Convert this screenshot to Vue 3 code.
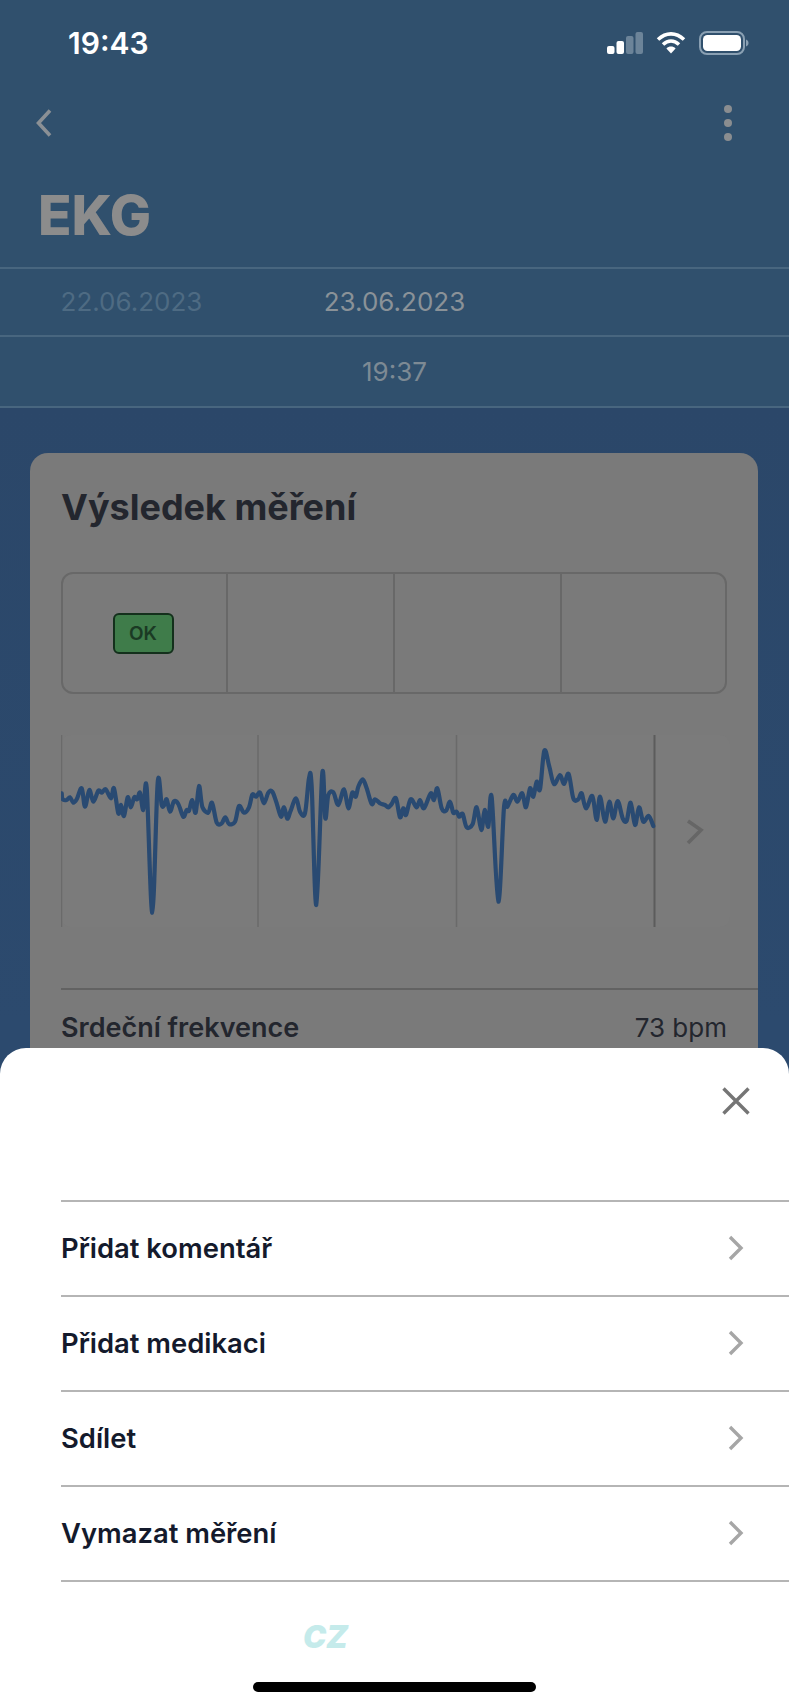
<template>
  <div class="page">
    <header class="top">
      <div class="status">
        <span class="clock">19:43</span>
        <div class="status-icons">
          <svg width="36" height="24" viewBox="0 0 36 24">
            <rect x="0" y="15" width="7.5" height="8" rx="2" fill="#fff" />
            <rect x="9.5" y="10" width="7.5" height="13" rx="2" fill="#fff" />
            <rect x="19" y="5" width="7.5" height="18" rx="2" fill="#6c8499" />
            <rect x="28.5" y="1" width="7.5" height="22" rx="2" fill="#6c8499" />
          </svg>
          <svg width="30" height="24" viewBox="0 0 30 24">
            <path d="M2 8.5C10 1 20 1 28 8.5" fill="none" stroke="#fff" stroke-width="3.6" />
            <path d="M7 13.5C12 9 18 9 23 13.5" fill="none" stroke="#fff" stroke-width="3.6" />
            <path d="M10.4 17.4C13 15 17 15 19.6 17.4L15 22.6Z" fill="#fff" />
          </svg>
          <svg width="50" height="24" viewBox="0 0 50 24">
            <rect x="1" y="1" width="44" height="22" rx="7" fill="none" stroke="#8aa0b3" stroke-width="2" />
            <rect x="4" y="4" width="38" height="16" rx="4.5" fill="#fff" />
            <path d="M47 8.5C49 9.5 49.5 10.5 49.5 12S49 14.5 47 15.5Z" fill="#8aa0b3" />
          </svg>
        </div>
      </div>

      <div class="nav">
        <svg width="20" height="30" viewBox="0 0 20 30">
          <path d="M16 2.5L4.5 15L16 27.5" fill="none" stroke="#8b9095" stroke-width="3.6" />
        </svg>
        <div class="dots"><i></i><i></i><i></i></div>
      </div>

      <h1 class="title">EKG</h1>

      <div class="picker dates">
        <span class="far">22.06.2023</span>
        <span class="near">23.06.2023</span>
      </div>
      <div class="picker times">
        <span></span>
        <span class="mid">19:37</span>
      </div>
    </header>

    <main class="body">
      <section class="card">
        <h2>Výsledek měření</h2>

        <div class="tiles">
          <div class="tile"><span class="ok">OK</span></div>
          <div class="tile"></div>
          <div class="tile"></div>
          <div class="tile"></div>
        </div>

        <div class="chart">
          <svg width="669" height="192" viewBox="61 735 669 192">
            <line v-for="x in gridLines" :key="x" :x1="x" :x2="x" y1="735" y2="927" stroke="#6a6a6a" stroke-width="1.5" />
            <line x1="654.5" x2="654.5" y1="735" y2="927" stroke="#5c5c5c" stroke-width="2" />
            <path :d="trace" fill="none" stroke="#294a72" stroke-width="4.2" stroke-linejoin="round" stroke-linecap="round" />
            <path d="M688 821L701 830L688 843" fill="none" stroke="#666" stroke-width="3.6" />
          </svg>
        </div>

        <div class="stat">
          <b>Srdeční frekvence</b>
          <span>73 bpm</span>
        </div>
      </section>
    </main>

    <section class="sheet">
      <div class="sheet-head">
        <svg width="28" height="28" viewBox="0 0 28 28">
          <path d="M1.5 1.5L26.5 26.5M26.5 1.5L1.5 26.5" stroke="#757575" stroke-width="3.4" />
        </svg>
      </div>
      <ul class="menu">
        <li v-for="item in menu" :key="item">
          <span>{{ item }}</span>
          <svg width="16" height="26" viewBox="0 0 16 26">
            <path d="M2 2L13 13L2 24" fill="none" stroke="#a6a6a6" stroke-width="3.4" />
          </svg>
        </li>
      </ul>
      <div class="brand">CZ</div>
      <div class="home"></div>
    </section>
  </div>
</template>

<script setup>
const menu = ['Přidat komentář', 'Přidat medikaci', 'Sdílet', 'Vymazat měření']
const gridLines = [61.5, 258, 456.5]

// trace read off the reference, in crop coordinates (3x)
const partA = [[65,220],[68,238],[80,240],[90,232],[100,248],[110,238],[125,205],[135,260],[148,210],[160,245],[175,212],[185,218],[197,208],[213,235],[222,205],[235,280],[243,255],[252,288],[263,232],[272,262],[283,232],[292,238],[300,218],[310,270],[320,203],[337,578],[353,188],[365,255],[373,255],[380,238],[390,275],[402,244],[415,252],[430,290],[440,270],[447,272],[457,240],[467,278],[477,198],[487,260],[505,278],[516,248],[530,308],[545,310],[556,292],[567,312],[585,305],[597,258],[612,278],[627,262],[637,224],[648,230],[660,218],[672,250],[685,218],[697,215],[710,250],[723,290],[732,262],[742,296],[752,272],[768,235],[780,275],[795,280],[807,175],[815,200],[829,555],[847,160],[856,295],[865,225],[880,217],[895,255],[912,208],[925,265],[937,218],[947,230],[955,200],[968,178],[980,205],[995,252],[1005,238],[1020,250],[1035,255],[1045,262],[1055,252],[1068,235],[1080,292],[1090,265],[1098,285],[1112,238],[1130,262],[1140,240]]
const partB = [[42,265],[62,220],[72,240],[82,205],[95,265],[108,272],[120,245],[130,278],[140,275],[148,290],[158,282],[170,322],[188,312],[200,262],[214,330],[224,270],[235,320],[245,232],[265,545],[282,262],[292,260],[310,225],[322,245],[337,220],[348,262],[360,205],[370,230],[380,185],[390,208],[403,92],[418,140],[432,192],[450,165],[462,192],[476,162],[490,235],[505,238],[515,220],[528,265],[547,228],[560,300],[570,230],[585,305],[598,245],[610,295],[623,243],[638,295],[650,302],[662,248],[675,315],[687,262],[700,305],[716,288],[730,318]]

const pts = [
  ...partA.map(([x, y]) => [40 + x / 3, 720 + y / 3]),
  ...partB.map(([x, y]) => [410 + x / 3, 720 + y / 3])
]

function smooth(p) {
  let d = `M${p[0][0].toFixed(1)} ${p[0][1].toFixed(1)}`
  for (let i = 0; i < p.length - 1; i++) {
    const a = p[i - 1] || p[i]
    const b = p[i]
    const c = p[i + 1]
    const e = p[i + 2] || c
    const c1 = [b[0] + (c[0] - a[0]) / 6, b[1] + (c[1] - a[1]) / 6]
    const c2 = [c[0] - (e[0] - b[0]) / 6, c[1] - (e[1] - b[1]) / 6]
    d += `C${c1[0].toFixed(1)} ${c1[1].toFixed(1)} ${c2[0].toFixed(1)} ${c2[1].toFixed(1)} ${c[0].toFixed(1)} ${c[1].toFixed(1)}`
  }
  return d
}

const trace = smooth(pts)
</script>

<style>
html, body { margin: 0; background: #2c4a6e; }
</style>

<style scoped>
.page {
  position: relative;
  width: 789px;
  height: 1707px;
  overflow: hidden;
  font-family: Inter, "Liberation Sans", sans-serif;
  background: linear-gradient(#2b4769 24%, #2c4a6e 60%);
}
.top { background: #30506d; height: 408px; }
.status {
  height: 86px;
  display: flex;
  justify-content: space-between;
  align-items: center;
  padding: 0 40px 0 68px;
}
.clock { color: #fff; font-size: 30px; font-weight: 600; }
.status-icons { display: flex; align-items: center; gap: 13px; }
.status-icons svg { display: block; }
.nav {
  height: 74px;
  display: flex;
  justify-content: space-between;
  align-items: center;
  padding: 0 57px 0 34px;
}
.dots { display: flex; flex-direction: column; gap: 6px; }
.dots i { width: 8px; height: 8px; border-radius: 50%; background: #8a8d90; }
.title {
  margin: 0;
  height: 107px;
  padding: 16px 0 0 38px;
  box-sizing: border-box;
  color: #8c8c8c;
  font-size: 55px;
  font-weight: 800;
  line-height: 78px;
}
.picker {
  display: grid;
  grid-template-columns: repeat(3, 263px);
  align-items: center;
  justify-items: center;
  border-top: 2px solid #48667f;
  font-size: 26px;
  box-sizing: border-box;
}
.dates { height: 68px; }
.dates span { margin-top: -2px; }
.times { height: 73px; border-bottom: 2px solid #48667f; }
.far { color: #4e6b83; }
.near { color: #8a9298; }
.mid { color: #7d8a94; }

.body { padding: 45px 31px 0 30px; }
.card {
  height: 700px;
  padding: 30px 0 0 31px;
  box-sizing: border-box;
  background: #7a7a7a;
  border-radius: 18px;
}
.card h2 {
  margin: 0;
  color: #23262e;
  font-size: 36px;
  font-weight: 700;
  line-height: 48px;
}
.tiles {
  margin-top: 41px;
  width: 666px;
  height: 122px;
  box-sizing: border-box;
  display: grid;
  grid-template-columns: 163px 167px 167px 1fr;
  border: 2px solid #686868;
  border-radius: 12px;
}
.tile {
  display: flex;
  align-items: center;
  justify-content: center;
  border-left: 2px solid #686868;
}
.tile:first-child { border-left: none; padding-right: 3px; }
.ok {
  width: 61px;
  height: 41px;
  box-sizing: border-box;
  display: flex;
  align-items: center;
  justify-content: center;
  background: #3f7c4a;
  border: 2px solid #14301c;
  border-radius: 6px;
  color: #1b3a24;
  font-size: 19px;
  font-weight: 600;
}
.chart {
  margin-top: 41px;
  width: 669px;
  height: 192px;
  background: #7b7b7b;
  border-radius: 10px;
}
.chart svg { display: block; }
.stat {
  margin-top: 61px;
  height: 78px;
  display: flex;
  justify-content: space-between;
  align-items: center;
  padding: 0 31px 2px 0;
  border-top: 2px solid #626262;
  box-sizing: border-box;
  color: #23262e;
  font-size: 26px;
}
.stat b { font-weight: 600; font-size: 27px; }

.sheet {
  position: absolute;
  left: 0;
  right: 0;
  bottom: 0;
  height: 659px;
  background: #fff;
  border-radius: 26px 26px 0 0;
}
.sheet-head {
  height: 152px;
  display: flex;
  justify-content: flex-end;
  align-items: flex-start;
  padding: 39px 39px 0 0;
  box-sizing: border-box;
}
.sheet-head svg { display: block; }
.menu {
  list-style: none;
  margin: 0 0 0 61px;
  padding: 0;
  border-top: 2px solid #b5b5b5;
}
.menu li {
  height: 95px;
  box-sizing: border-box;
  display: flex;
  justify-content: space-between;
  align-items: center;
  padding-right: 45px;
  border-bottom: 2px solid #b5b5b5;
  color: #141a2c;
  font-size: 27.4px;
  font-weight: 600;
}
.menu li span { margin-top: -2px; }
.menu li svg { margin-top: -2px; }
.brand {
  margin: 42px 0 0 303px;
  color: #c5ebeb;
  font-size: 31px;
  font-weight: 900;
  font-style: italic;
  line-height: 26px;
}
.home {
  position: absolute;
  left: 253px;
  bottom: 15px;
  width: 283px;
  height: 10px;
  border-radius: 5px;
  background: #000;
}
</style>
